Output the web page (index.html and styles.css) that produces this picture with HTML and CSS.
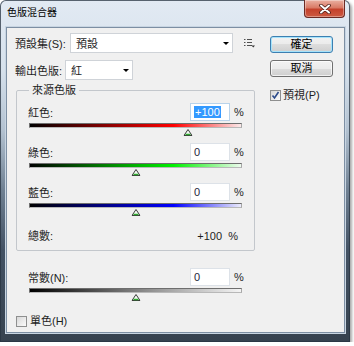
FILE: index.html
```html
<!DOCTYPE html>
<html lang="zh-Hant">
<head>
    <meta charset="UTF-8">
    <title>色版混合器</title>
    <link rel="stylesheet" href="styles.css">
</head>
<body>
    <div class="window">
        <div class="titlebar">
            <span class="title">色版混合器</span>
            <div class="close">
                <svg width="12" height="10" viewBox="0 0 12 10">
                    <path d="M2 1.5 L10 8.5 M10 1.5 L2 8.5" stroke="#4a1d17" stroke-width="3.6" stroke-linecap="round"/>
                    <path d="M2 1.5 L10 8.5 M10 1.5 L2 8.5" stroke="#fff" stroke-width="2" stroke-linecap="round"/>
                </svg>
            </div>
        </div>
        <div class="client">
            <div class="main">
                <div class="row preset">
                    <span class="label">預設集(S):</span>
                    <div class="combo wide">預設<span class="arrow"></span></div>
                    <svg class="menu-icon" width="11" height="10" viewBox="0 0 11 10">
                        <path d="M0 1.5h1.5M3 1.5h5M0 4.5h1.5M3 4.5h5M0 7.5h1.5M3 7.5h5" stroke="#505050" stroke-width="1"/>
                        <path d="M7.5 7.5h3.5l-1.75 2z" fill="#303030"/>
                    </svg>
                </div>
                <div class="row output">
                    <span class="label">輸出色版:</span>
                    <div class="combo narrow">紅<span class="arrow"></span></div>
                </div>

                <fieldset class="group">
                    <legend>來源色版</legend>
                    <div class="slider">
                        <div class="top">
                            <span class="name">紅色:</span>
                            <div class="field focus"><span class="sel">+100</span></div>
                            <span class="pct">%</span>
                        </div>
                        <div class="track red">
                            <svg class="thumb" style="left: 75%" width="9" height="7" viewBox="0 0 9 7">
                                <path d="M4.5 0.5 L8.5 6.5 L0.5 6.5 Z" fill="#f4fbf4" stroke="#3a3a3a" stroke-width="1"/>
                                <path d="M2 5.5 H7" stroke="#2fa82f" stroke-width="1.4"/>
                            </svg>
                        </div>
                    </div>
                    <div class="slider">
                        <div class="top">
                            <span class="name">綠色:</span>
                            <div class="field">0</div>
                            <span class="pct">%</span>
                        </div>
                        <div class="track green">
                            <svg class="thumb" style="left: 50%" width="9" height="7" viewBox="0 0 9 7">
                                <path d="M4.5 0.5 L8.5 6.5 L0.5 6.5 Z" fill="#f4fbf4" stroke="#3a3a3a" stroke-width="1"/>
                                <path d="M2 5.5 H7" stroke="#2fa82f" stroke-width="1.4"/>
                            </svg>
                        </div>
                    </div>
                    <div class="slider">
                        <div class="top">
                            <span class="name">藍色:</span>
                            <div class="field">0</div>
                            <span class="pct">%</span>
                        </div>
                        <div class="track blue">
                            <svg class="thumb" style="left: 50%" width="9" height="7" viewBox="0 0 9 7">
                                <path d="M4.5 0.5 L8.5 6.5 L0.5 6.5 Z" fill="#f4fbf4" stroke="#3a3a3a" stroke-width="1"/>
                                <path d="M2 5.5 H7" stroke="#2fa82f" stroke-width="1.4"/>
                            </svg>
                        </div>
                    </div>
                    <div class="total">
                        <span>總數:</span>
                        <span>+100 &nbsp;%</span>
                    </div>
                </fieldset>

                <div class="slider constant">
                    <div class="top">
                        <span class="name">常數(N):</span>
                        <div class="field">0</div>
                        <span class="pct">%</span>
                    </div>
                    <div class="track gray">
                        <svg class="thumb" style="left: 50%" width="9" height="7" viewBox="0 0 9 7">
                            <path d="M4.5 0.5 L8.5 6.5 L0.5 6.5 Z" fill="#f4fbf4" stroke="#3a3a3a" stroke-width="1"/>
                            <path d="M2 5.5 H7" stroke="#2fa82f" stroke-width="1.4"/>
                        </svg>
                    </div>
                </div>

                <label class="check mono"><span class="box"></span>單色(H)</label>
            </div>

            <div class="side">
                <button class="btn default">確定</button>
                <button class="btn">取消</button>
                <label class="check preview">
                    <span class="box">
                        <svg width="9" height="9" viewBox="0 0 9 9">
                            <path d="M1.5 4.5 L3.5 7 L7.5 1" fill="none" stroke="#2b4a8a" stroke-width="1.6"/>
                        </svg>
                    </span>預視(P)
                </label>
            </div>
        </div>
    </div>
</body>
</html>
```

FILE: styles.css
```css
body {
    margin: 0;
    background: #fff;
    font-family: "Liberation Sans", "Noto Sans CJK TC", sans-serif;
    font-size: 11px;
    color: #1e1e1e;
}
.window {
    width: 350px;
    height: 342px;
    box-sizing: border-box;
    padding: 0 5px 0 6px;
    border-radius: 6px 6px 0 0;
    background: linear-gradient(180deg, #e2eaf3 0, #d6e1ec 70px, #b3c2d1 130px, #6f8092 190px, #435264 250px, #36424f 100%);
    box-shadow: inset 0 0 0 1px rgba(40, 52, 66, 0.75), 2px 2px 3px rgba(0, 0, 0, 0.35);
}
.titlebar {
    height: 27px;
    display: flex;
    align-items: flex-start;
}
.title {
    margin: 7px 0 0 1px;
    font-size: 10px;
    line-height: 12px;
    color: #000;
}
.close {
    margin-left: auto;
    width: 41px;
    height: 18px;
    box-sizing: border-box;
    border: 1px solid #6b2a24;
    border-top: none;
    border-radius: 0 0 4px 4px;
    background: linear-gradient(#eab0a2 0%, #d97a66 45%, #c4412c 55%, #cc5a42 100%);
    box-shadow: inset 0 0 0 1px rgba(255, 255, 255, 0.35);
    display: flex;
    align-items: center;
    justify-content: center;
}
.client {
    height: 306px;
    box-sizing: border-box;
    border: 1px solid #7d8fa3;
    box-shadow: 0 0 0 1px #c8d5e2;
    background: #f0f0f0;
    display: flex;
    gap: 14px;
    padding: 5px 10px 0 8px;
}
.main {
    width: 241px;
}
.row {
    display: flex;
    align-items: center;
    height: 20px;
}
.preset .label {
    width: 55px;
}
.output {
    margin-top: 7px;
}
.output .label {
    width: 50px;
}
.combo {
    height: 20px;
    box-sizing: border-box;
    border: 1px solid #cfd3d8;
    background: #fff;
    display: flex;
    align-items: center;
    justify-content: space-between;
    padding: 0 3px 0 5px;
}
.combo.wide {
    width: 163px;
}
.combo.narrow {
    width: 68px;
}
.arrow {
    width: 0;
    height: 0;
    border-left: 3px solid transparent;
    border-right: 3px solid transparent;
    border-top: 3px solid #000;
}
.menu-icon {
    margin-left: 11px;
}
.group {
    margin: 4px 1px 0;
    padding: 7px 11px 8px 11px;
    border: 1px solid #c3c7cc;
    border-radius: 2px;
    min-width: 0;
}
.group legend {
    padding: 0 3px;
    margin-left: 1px;
    line-height: 12px;
}
.slider {
    margin-bottom: 8px;
    padding-bottom: 7px;
}
.slider .top {
    display: flex;
    align-items: center;
    height: 18px;
}
.slider .name {
    flex: 1;
}
.field {
    width: 40px;
    height: 18px;
    box-sizing: border-box;
    border: 1px solid #dde2e8;
    background: #fff;
    padding-left: 3px;
    line-height: 16px;
    color: #1e1e3c;
}
.field.focus {
    border-color: #b9d3ea;
}
.sel {
    background: #3399ff;
    color: #fff;
    padding: 0 1px;
}
.pct {
    width: 9px;
    margin-left: 4px;
}
.track {
    position: relative;
    height: 5px;
    box-sizing: border-box;
    margin: 2px 1px 0;
    border: 1px solid #6e6e6e;
    border-bottom-color: #b8b8b8;
    border-right-color: #a8a8a8;
}
.track.red {
    background: linear-gradient(to right, #000 0%, #ff0000 68%, #fbeaea 100%);
}
.track.green {
    background: linear-gradient(to right, #000 0%, #00f000 68%, #eefbee 100%);
}
.track.blue {
    background: linear-gradient(to right, #000 0%, #0000ff 68%, #ececfb 100%);
}
.track.gray {
    background: linear-gradient(to right, #000 0%, #8c8c8c 55%, #f4f4f4 100%);
}
.thumb {
    position: absolute;
    top: 5px;
    transform: translateX(-50%);
}
.total {
    display: flex;
    justify-content: space-between;
    padding-right: 5px;
    line-height: 12px;
    margin-top: 15px;
}
.constant {
    margin: 17px 13px 0 13px;
}
.check {
    display: flex;
    align-items: center;
    gap: 3px;
    line-height: 12px;
}
.box {
    width: 11px;
    height: 11px;
    box-sizing: border-box;
    border: 1px solid #8e8f8f;
    background: linear-gradient(135deg, #d8d8d8, #fbfbfb);
    display: flex;
    align-items: center;
    justify-content: center;
}
.mono {
    margin: 15px 0 0 1px;
}
.side {
    width: 63px;
    padding-top: 3px;
    display: flex;
    flex-direction: column;
}
.btn {
    width: 63px;
    height: 17px;
    padding: 0;
    font: inherit;
    color: #000;
    line-height: 15px;
    border: 1px solid #707070;
    border-radius: 3px;
    background: linear-gradient(#f2f2f2 0%, #ebebeb 50%, #dddddd 50%, #cfcfcf 100%);
    box-shadow: inset 0 0 0 1px rgba(255, 255, 255, 0.7);
}
.btn.default {
    border-color: #3c7fb1;
    box-shadow: inset 0 0 0 1px #a6e3fb;
}
.btn + .btn {
    margin-top: 7px;
}
.preview {
    margin-top: 12px;
    gap: 2px;
}
```
